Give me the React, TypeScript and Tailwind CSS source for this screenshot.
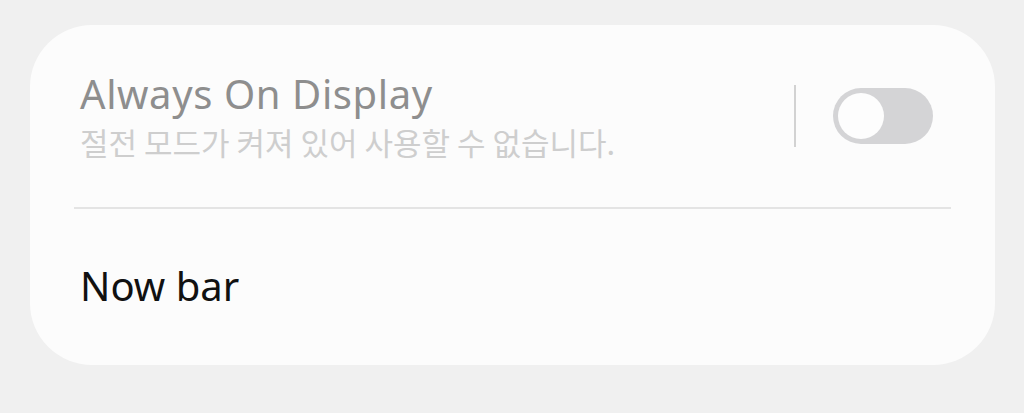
export default function App() {
  return (
    <div className="w-[1024px] h-[413px] bg-[#f0f0f0] pt-[25px] pl-[30px]">
      <div className="w-[965px] h-[340px] bg-[#fcfcfc] rounded-[62px] flex flex-col">
        <div className="h-[182px] flex items-center pl-[50px] pr-[62px]">
          <div className="flex-1 flex flex-col font-['Noto_Sans','Noto_Sans_CJK_KR',sans-serif]">
            <div className="text-[40px] leading-[46px] tracking-[0.6px] text-[#8e8e8e]">Always On Display</div>
            <div className="text-[31px] leading-[40px] text-[#cecece] mt-[5px] font-['Noto_Sans_CJK_KR',sans-serif]">절전 모드가 켜져 있어 사용할 수 없습니다.</div>
          </div>
          <div className="w-[2px] h-[62px] bg-[#d2d2d2] mr-[37px]" />
          <div className="w-[100px] h-[56px] rounded-full bg-[#d4d4d6] flex items-center pl-[5px]">
            <div className="w-[46px] h-[46px] rounded-full bg-[#fdfdfd]" />
          </div>
        </div>
        <div className="h-[2px] bg-[#e4e4e4] mx-[44px]" />
        <div className="flex-1 flex items-center pl-[50px] pb-[2px]">
          <div className="text-[40px] leading-[46px] text-[#111111] font-['Noto_Sans',sans-serif]">Now bar</div>
        </div>
      </div>
    </div>
  );
}
